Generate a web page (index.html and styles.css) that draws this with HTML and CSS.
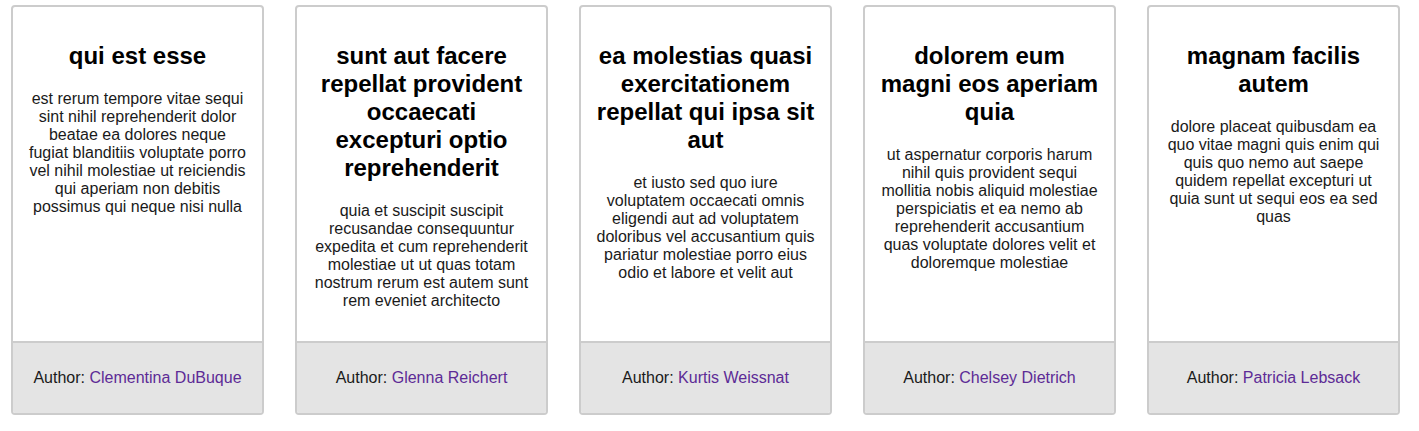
FILE: index.html
```html
<!DOCTYPE html>
<html>
<head>
<meta charset="utf-8">
<link rel="stylesheet" href="styles.css">
</head>
<body>
<div class="cards">
  <div class="card">
    <div class="card-body">
      <h2 class="title">qui est esse</h2>
      <p class="text">est rerum tempore vitae sequi sint nihil reprehenderit dolor beatae ea dolores neque fugiat blanditiis voluptate porro vel nihil molestiae ut reiciendis qui aperiam non debitis possimus qui neque nisi nulla</p>
    </div>
    <div class="card-footer">Author: <a class="author" href="#">Clementina DuBuque</a></div>
  </div>
  <div class="card">
    <div class="card-body">
      <h2 class="title">sunt aut facere repellat provident occaecati excepturi optio reprehenderit</h2>
      <p class="text">quia et suscipit suscipit recusandae consequuntur expedita et cum reprehenderit molestiae ut ut quas totam nostrum rerum est autem sunt rem eveniet architecto</p>
    </div>
    <div class="card-footer">Author: <a class="author" href="#">Glenna Reichert</a></div>
  </div>
  <div class="card">
    <div class="card-body">
      <h2 class="title">ea molestias quasi exercitationem repellat qui ipsa sit aut</h2>
      <p class="text">et iusto sed quo iure voluptatem occaecati omnis eligendi aut ad voluptatem doloribus vel accusantium quis pariatur molestiae porro eius odio et labore et velit aut</p>
    </div>
    <div class="card-footer">Author: <a class="author" href="#">Kurtis Weissnat</a></div>
  </div>
  <div class="card">
    <div class="card-body">
      <h2 class="title">dolorem eum magni eos aperiam quia</h2>
      <p class="text">ut aspernatur corporis harum nihil quis provident sequi mollitia nobis aliquid molestiae perspiciatis et ea nemo ab reprehenderit accusantium quas voluptate dolores velit et doloremque molestiae</p>
    </div>
    <div class="card-footer">Author: <a class="author" href="#">Chelsey Dietrich</a></div>
  </div>
  <div class="card">
    <div class="card-body">
      <h2 class="title">magnam facilis autem</h2>
      <p class="text">dolore placeat quibusdam ea quo vitae magni quis enim qui quis quo nemo aut saepe quidem repellat excepturi ut quia sunt ut sequi eos ea sed quas</p>
    </div>
    <div class="card-footer">Author: <a class="author" href="#">Patricia Lebsack</a></div>
  </div>
</div>
</body>
</html>
```

FILE: styles.css
```css
html, body {
  margin: 0;
  padding: 0;
  background: #ffffff;
  font-family: "Liberation Sans", Arial, sans-serif;
  font-size: 16px;
  color: #111;
}

.cards {
  display: flex;
  align-items: stretch;
  gap: 31px;
  padding: 5px 0 0 11px;
}

.card {
  width: 253px;
  flex: 0 0 253px;
  box-sizing: border-box;
  border: 2px solid #cccccc;
  border-radius: 4px;
  display: flex;
  flex-direction: column;
  overflow: hidden;
  background: #fff;
}

.card-body {
  flex: 1;
  padding: 15px;
  text-align: center;
}

.title {
  font-size: 24px;
  font-weight: bold;
  margin: 20px 0;
  color: #000;
}

.text {
  margin: 16px 0;
  color: #1a1a1a;
}

.card-footer {
  background: #e4e4e4;
  border-top: 2px solid #cccccc;
  padding: 26px 10px;
  text-align: center;
  color: #1a1a1a;
}

.author {
  color: #5d2b96;
  text-decoration: none;
}
```
